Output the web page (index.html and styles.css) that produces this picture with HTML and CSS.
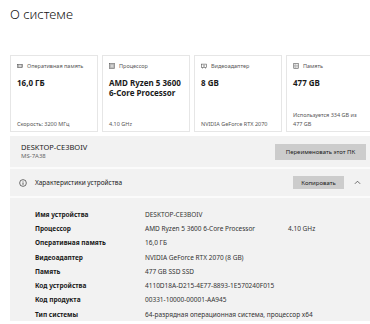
FILE: index.html
```html
<!DOCTYPE html>
<html lang="ru">
<head>
<meta charset="utf-8">
<title>О системе</title>
<link rel="stylesheet" href="styles.css">
</head>
<body>
<div class="page">
  <h1 class="title">О системе</h1>

  <div class="cards">
    <div class="card">
      <div class="card-label">
        <svg class="ico" viewBox="0 0 8 8"><rect x="0.5" y="2" width="7" height="4" fill="none" stroke="#555" stroke-width="0.8"/><path d="M2 2v4M4 2v4M6 2v4" stroke="#555" stroke-width="0.6"/></svg>
        <span>Оперативная память</span>
      </div>
      <div class="card-value">16,0 ГБ</div>
      <div class="card-foot">Скорость: 3200 МГц</div>
    </div>
    <div class="card">
      <div class="card-label">
        <svg class="ico" viewBox="0 0 8 8"><rect x="0.6" y="0.6" width="6.8" height="6.8" fill="none" stroke="#555" stroke-width="0.8"/><rect x="2.5" y="2.5" width="3" height="3" fill="none" stroke="#555" stroke-width="0.7"/><path d="M1 1l1.5 1.5M7 1L5.5 2.5M1 7l1.5-1.5M7 7L5.5 5.5" stroke="#555" stroke-width="0.5"/></svg>
        <span>Процессор</span>
      </div>
      <div class="card-value">AMD Ryzen 5 3600<br>6-Core Processor</div>
      <div class="card-foot">4.10 GHz</div>
    </div>
    <div class="card">
      <div class="card-label">
        <svg class="ico" viewBox="0 0 8 8"><rect x="0.5" y="1.5" width="7" height="4.5" fill="none" stroke="#555" stroke-width="0.8"/><path d="M2 6v1.5M6 6v1.5" stroke="#555" stroke-width="0.7"/><circle cx="4" cy="3.75" r="1" fill="none" stroke="#555" stroke-width="0.6"/></svg>
        <span>Видеоадаптер</span>
      </div>
      <div class="card-value">8 GB</div>
      <div class="card-foot">NVIDIA GeForce RTX 2070</div>
    </div>
    <div class="card">
      <div class="card-label">
        <svg class="ico" viewBox="0 0 8 8"><rect x="1" y="0.5" width="6" height="7" fill="none" stroke="#555" stroke-width="0.8"/><path d="M1 3h6M1 5.2h6" stroke="#555" stroke-width="0.6"/><path d="M2.5 1.8h1M2.5 4.1h1M2.5 6.3h1" stroke="#555" stroke-width="0.5"/></svg>
        <span>Память</span>
      </div>
      <div class="card-value">477 GB</div>
      <div class="card-foot">Используется 334 GB из<br>477 GB</div>
    </div>
  </div>

  <div class="panel">
    <div class="panel-row pc-row">
      <div class="pc-name">
        <div class="pc-title">DESKTOP-CE3BOIV</div>
        <div class="pc-model">MS-7A38</div>
      </div>
      <button class="btn btn-rename">Переименовать этот ПК</button>
    </div>

    <div class="panel-row spec-head">
      <svg class="info" viewBox="0 0 10 10"><circle cx="5" cy="5" r="4.2" fill="none" stroke="#222" stroke-width="0.8"/><path d="M5 4.3v3" stroke="#222" stroke-width="0.9"/><circle cx="5" cy="2.9" r="0.55" fill="#222"/></svg>
      <span class="spec-title">Характеристики устройства</span>
      <button class="btn btn-copy">Копировать</button>
      <svg class="chev" viewBox="0 0 8 5"><path d="M1 4l3-3 3 3" fill="none" stroke="#333" stroke-width="0.8"/></svg>
    </div>

    <div class="specs">
      <div class="spec-label">Имя устройства</div><div class="spec-val">DESKTOP-CE3BOIV</div><div></div>
      <div class="spec-label">Процессор</div><div class="spec-val">AMD Ryzen 5 3600 6-Core Processor</div><div class="spec-val">4.10 GHz</div>
      <div class="spec-label">Оперативная память</div><div class="spec-val">16,0 ГБ</div><div></div>
      <div class="spec-label">Видеоадаптер</div><div class="spec-val">NVIDIA GeForce RTX 2070 (8 GB)</div><div></div>
      <div class="spec-label">Память</div><div class="spec-val">477 GB SSD SSD</div><div></div>
      <div class="spec-label">Код устройства</div><div class="spec-val">4110D18A-D215-4E77-8893-1E570240F015</div><div></div>
      <div class="spec-label">Код продукта</div><div class="spec-val">00331-10000-00001-AA945</div><div></div>
      <div class="spec-label">Тип системы</div><div class="spec-val wide">64-разрядная операционная система, процессор x64</div>
    </div>
  </div>
</div>
</body>
</html>
```

FILE: styles.css
```css
html, body {
  margin: 0;
  padding: 0;
  background: #ffffff;
  overflow: hidden;
}

body {
  width: 370px;
  height: 324px;
  font-family: "Noto Sans", "Open Sans", sans-serif;
  color: #1b1b1b;
}

.page {
  width: 366px;
  padding-left: 10px;
}

.title {
  margin: 0;
  padding-top: 5px;
  font-size: 13px;
  line-height: 18px;
  font-weight: 300;
  color: #111;
}

.cards {
  display: grid;
  grid-template-columns: repeat(4, 88px);
  gap: 4px;
  margin-top: 32px;
}

.card {
  box-sizing: border-box;
  height: 77px;
  border: 1px solid #e6e6e6;
  padding: 6px 5px 3px 6px;
  display: flex;
  flex-direction: column;
  background: #fff;
}

.card-label {
  display: flex;
  align-items: center;
  gap: 4px;
  font-size: 5.5px;
  line-height: 8px;
  color: #555;
}

.ico {
  width: 6px;
  height: 6px;
  flex: none;
}

.card-value {
  margin-top: 8px;
  font-size: 8px;
  line-height: 9.5px;
  font-weight: 700;
  color: #1a1a1a;
  white-space: nowrap;
}

.card-foot {
  margin-top: auto;
  font-size: 5.5px;
  line-height: 8.5px;
  color: #555;
}

.panel {
  margin-top: 4px;
  background: #f2f2f2;
}

.panel-row {
  display: flex;
  align-items: center;
  box-sizing: border-box;
  border-bottom: 2px solid #fbfbfb;
}

.pc-row {
  height: 33px;
  padding: 0 10px 0 11px;
}

.pc-name {
  flex: 1;
}

.pc-title {
  font-size: 7.5px;
  line-height: 9px;
  color: #1a1a1a;
}

.pc-model {
  font-size: 6px;
  line-height: 8px;
  color: #666;
}

.btn {
  font-family: inherit;
  border: none;
  background: #cccccc;
  color: #1a1a1a;
  padding: 0;
  margin: 0;
  font-size: 6px;
}

.btn-rename {
  width: 91px;
  height: 16px;
}

.spec-head {
  height: 29px;
  padding: 0 15px 0 9px;
}

.info {
  width: 8px;
  height: 8px;
  flex: none;
}

.spec-title {
  flex: 1;
  margin-left: 8px;
  font-size: 6.5px;
  color: #1a1a1a;
}

.btn-copy {
  width: 51px;
  height: 13px;
  margin-right: 10px;
}

.chev {
  width: 7px;
  height: 5px;
  flex: none;
}

.specs {
  display: grid;
  grid-template-columns: 110px 143px auto;
  grid-auto-rows: 14.3px;
  align-items: center;
  padding: 9px 0 0 25px;
  font-size: 6.5px;
}

.spec-label {
  font-weight: 700;
  color: #1a1a1a;
}

.spec-val {
  color: #333;
  white-space: nowrap;
}

.spec-val.wide {
  grid-column: span 2;
}
```
